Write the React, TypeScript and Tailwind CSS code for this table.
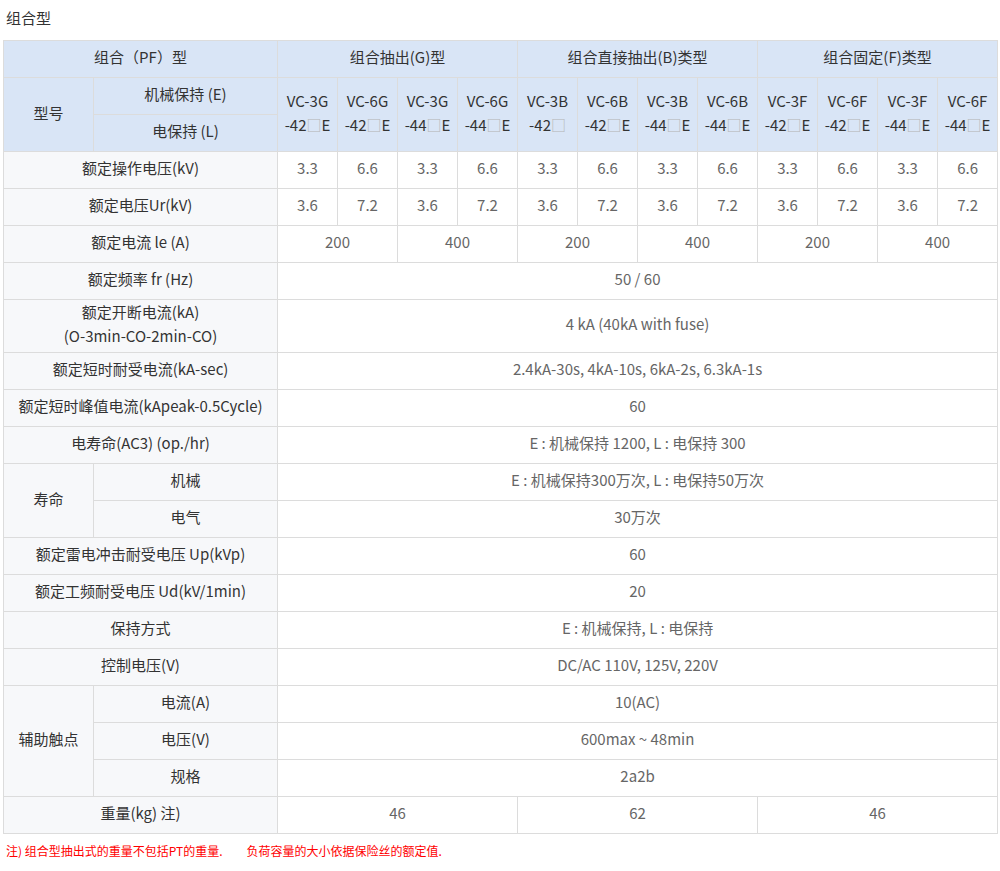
import React from 'react';

const box = <span className="text-[#b5b5b5]">□</span>;

const groups = [
  { title: '组合抽出(G)型', models: [['VC-3G', '-42', 'E'], ['VC-6G', '-42', 'E'], ['VC-3G', '-44', 'E'], ['VC-6G', '-44', 'E']] },
  { title: '组合直接抽出(B)类型', models: [['VC-3B', '-42', ''], ['VC-6B', '-42', 'E'], ['VC-3B', '-44', 'E'], ['VC-6B', '-44', 'E']] },
  { title: '组合固定(F)类型', models: [['VC-3F', '-42', 'E'], ['VC-6F', '-42', 'E'], ['VC-3F', '-44', 'E'], ['VC-6F', '-44', 'E']] },
];

const th = 'border border-[#dcdcdc] bg-[#d9e5f6] text-[#333] font-normal text-center px-0 pt-0 pb-[4px]';
const lab = 'border border-[#dcdcdc] bg-[#f7f8fa] text-[#333] text-center px-0 pt-0 pb-[4px]';
const val = 'border border-[#dcdcdc] bg-white text-[#666] text-center px-0 pt-0 pb-[4px]';

// single-value rows spanning all 12 columns
function FullRow({ label, value, sub, h = 'h-[37px]' }: { label: React.ReactNode; value: string; sub?: boolean; h?: string }) {
  return (
    <tr className={h}>
      {sub ? <td className={lab}>{label}</td> : <td colSpan={2} className={lab}>{label}</td>}
      <td colSpan={12} className={val}>{value}</td>
    </tr>
  );
}

export default function App() {
  const volt = ['3.3', '6.6', '3.3', '6.6', '3.3', '6.6', '3.3', '6.6', '3.3', '6.6', '3.3', '6.6'];
  const ur = ['3.6', '7.2', '3.6', '7.2', '3.6', '7.2', '3.6', '7.2', '3.6', '7.2', '3.6', '7.2'];

  return (
    <div className="w-[1000px] bg-white px-[3px] pt-[6px] text-[15px] leading-6" style={{ fontFamily: '"Noto Sans CJK SC", "Noto Sans", sans-serif' }}>
      <div className="h-6 pl-[3px] text-[#333] mb-[10px]">组合型</div>

      <table className="w-[994px] table-fixed border-collapse">
        <colgroup>
          <col className="w-[90px]" />
          <col className="w-[184px]" />
          {Array.from({ length: 12 }).map((_, i) => (
            <col key={i} className="w-[60px]" />
          ))}
        </colgroup>
        <thead>
          <tr className="h-[37px]">
            <th colSpan={2} className={th}>组合（PF）型</th>
            {groups.map((g) => (
              <th key={g.title} colSpan={4} className={th}>{g.title}</th>
            ))}
          </tr>
          <tr className="h-[37px]">
            <th rowSpan={2} className={th}>型号</th>
            <th className={th}>机械保持 (E)</th>
            {groups.flatMap((g) =>
              g.models.map((m, i) => (
                <th key={g.title + i} rowSpan={2} className={th}>
                  <div>{m[0]}</div>
                  <div>
                    {m[1]}
                    {box}
                    {m[2]}
                  </div>
                </th>
              ))
            )}
          </tr>
          <tr className="h-[37px]">
            <th className={th}>电保持 (L)</th>
          </tr>
        </thead>
        <tbody>
          <tr className="h-[37px]">
            <td colSpan={2} className={lab}>额定操作电压(kV)</td>
            {volt.map((v, i) => (
              <td key={i} className={val}>{v}</td>
            ))}
          </tr>
          <tr className="h-[37px]">
            <td colSpan={2} className={lab}>额定电压Ur(kV)</td>
            {ur.map((v, i) => (
              <td key={i} className={val}>{v}</td>
            ))}
          </tr>
          <tr className="h-[37px]">
            <td colSpan={2} className={lab}>额定电流 le (A)</td>
            {['200', '400', '200', '400', '200', '400'].map((v, i) => (
              <td key={i} colSpan={2} className={val}>{v}</td>
            ))}
          </tr>
          <FullRow label="额定频率 fr (Hz)" value="50 / 60" />
          <FullRow
            h="h-[53px]"
            label={
              <>
                <div>额定开断电流(kA)</div>
                <div>(O-3min-CO-2min-CO)</div>
              </>
            }
            value="4 kA (40kA with fuse)"
          />
          <FullRow label="额定短时耐受电流(kA-sec)" value="2.4kA-30s, 4kA-10s, 6kA-2s, 6.3kA-1s" />
          <FullRow label="额定短时峰值电流(kApeak-0.5Cycle)" value="60" />
          <FullRow label="电寿命(AC3) (op./hr)" value="E : 机械保持 1200, L : 电保持 300" />
          <tr className="h-[37px]">
            <td rowSpan={2} className={lab}>寿命</td>
            <td className={lab}>机械</td>
            <td colSpan={12} className={val}>E : 机械保持300万次, L : 电保持50万次</td>
          </tr>
          <FullRow sub label="电气" value="30万次" />
          <FullRow label="额定雷电冲击耐受电压 Up(kVp)" value="60" />
          <FullRow label="额定工频耐受电压 Ud(kV/1min)" value="20" />
          <FullRow label="保持方式" value="E : 机械保持, L : 电保持" />
          <FullRow label="控制电压(V)" value="DC/AC 110V, 125V, 220V" />
          <tr className="h-[37px]">
            <td rowSpan={3} className={lab}>辅助触点</td>
            <td className={lab}>电流(A)</td>
            <td colSpan={12} className={val}>10(AC)</td>
          </tr>
          <FullRow sub label="电压(V)" value="600max ~ 48min" />
          <FullRow sub label="规格" value="2a2b" />
          <tr className="h-[37px]">
            <td colSpan={2} className={lab}>重量(kg) 注)</td>
            <td colSpan={4} className={val}>46</td>
            <td colSpan={4} className={val}>62</td>
            <td colSpan={4} className={val}>46</td>
          </tr>
        </tbody>
      </table>

      <p className="mt-[7px] pl-[3px] text-[12px] leading-5 text-[#ff0000] whitespace-pre">注) 组合型抽出式的重量不包括PT的重量.　　负荷容量的大小依据保险丝的额定值.</p>
      <div className="h-[20px]" />
    </div>
  );
}
